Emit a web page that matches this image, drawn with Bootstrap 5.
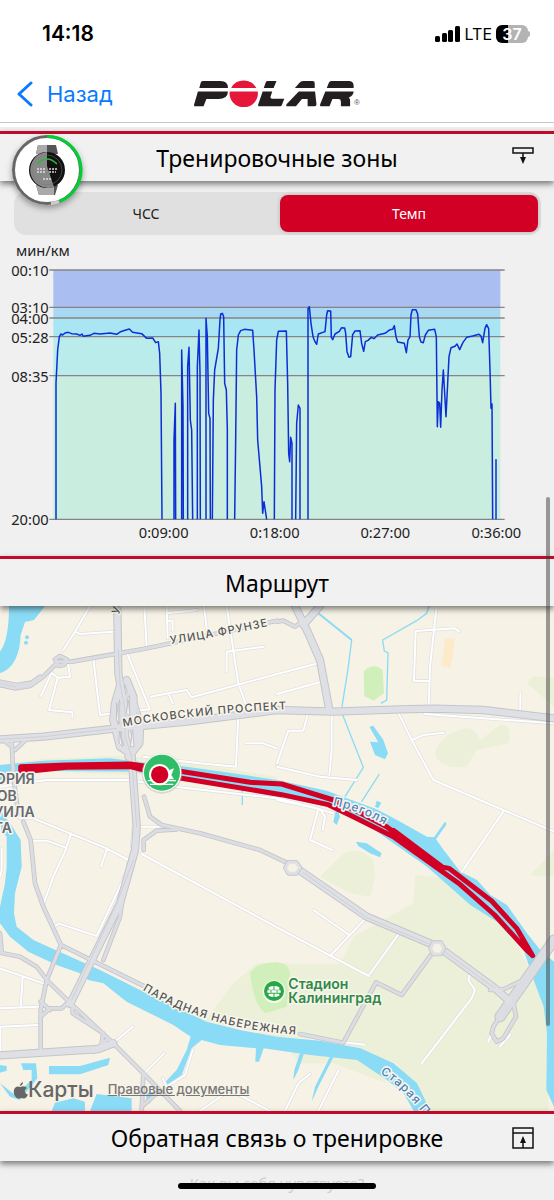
<!DOCTYPE html>
<html lang="ru">
<head>
<meta charset="utf-8">
<meta name="viewport" content="width=device-width, initial-scale=1">
<title>Polar</title>
<link href="https://cdn.jsdelivr.net/npm/bootstrap@5.3.0/dist/css/bootstrap.min.css" rel="stylesheet">
<style>
body{background:#f0f0f0;font-family:"Noto Sans",sans-serif;color:#111;overflow-x:hidden}
svg{display:block}
.status-row{height:65px;padding:2px 24px 0 42px;font-family:Inter,sans-serif;color:#000}
.clock{font-size:21px;font-weight:600}
.net{font-size:16px}
.batt{width:32px;height:18px;border-radius:6px;font-size:16px;line-height:18px;font-weight:600;color:#fff;background:linear-gradient(90deg,#000 37%,#b3b3b3 37%)}
.batt-tip{width:2px;height:6px;border-radius:0 2px 2px 0;background:#b3b3b3}
.nav-row{height:58px;border-bottom:1px solid #c6c6c6;display:grid;grid-template-columns:1fr auto 1fr;padding:0 17px}
.back{font:22px/28px Inter,sans-serif;color:#0a7aff;text-decoration:none;gap:14px}
.reg{font:8px/8px "Liberation Sans",sans-serif;color:#555}
.sec-head{height:50px;border-top:3px solid #c00a2b;background:#f1f1f1;box-shadow:0 3px 6px rgba(0,0,0,.5);display:grid;grid-template-columns:1fr auto 1fr;align-items:center;position:relative;z-index:2;padding:0 20px}
.sec-head h2{font-size:23px;line-height:32px;font-weight:400;margin:0;grid-column:2;color:#000}
.sec-head button{justify-self:end;border:0;background:none;padding:0}
.watch{position:absolute;left:8px;top:-2px;filter:drop-shadow(0 3px 3px rgba(0,0,0,.35))}
.seg{margin:11px 13px 0 14px;padding:3px;gap:5px;background:#e0e0e0;border-radius:12px}
.seg button{flex:1;height:37px;border:0;border-radius:8px;background:none;font-size:14px;color:#222}
.seg button.on{background:#d20024;color:#fff;box-shadow:0 0 4px rgba(0,0,0,.2)}
.chart{margin-top:5px;margin-bottom:6px}
.chart text{font-size:44px;fill:#222}
.map{background:#f6f2e6}
.map svg text{font-family:Inter,sans-serif;paint-order:stroke;stroke:#f8f5ec;stroke-width:9px;stroke-linejoin:round}
.map-foot{position:absolute;left:13px;bottom:7px;color:#666;font-family:Inter,sans-serif}
.map-foot .brand{font-size:21px;line-height:28px;font-weight:500;margin-right:14px}
.map-foot a{font-size:13px;color:#777;font-weight:500}
.foot{height:40px;position:relative;overflow:hidden}
.foot p{font-size:15px;line-height:24px;color:#ccc;margin:0;padding-top:10px}
.home{position:absolute;left:50%;top:22px;margin-left:-99px;width:198px;height:6px;border-radius:3px;background:#000}
.thumb{position:absolute;right:4px;top:497px;width:4px;height:529px;border-radius:2px;background:rgba(60,60,60,.5);z-index:5}
</style>
</head>
<body class="position-relative">
<header class="bg-white pb-1">
  <div class="status-row d-flex align-items-center justify-content-between">
    <span class="clock">14:18</span>
    <div class="d-flex align-items-center">
      <svg width="26" height="18" viewBox="0 0 26 18"><rect x="0" y="11" width="5" height="6" rx="1.5"/><rect x="7" y="8" width="5" height="9" rx="1.5"/><rect x="13" y="5" width="5" height="12" rx="1.5"/><rect x="20" y="1" width="5" height="16" rx="1.5"/></svg>
      <span class="net ms-1 me-1">LTE</span>
      <span class="batt text-center">37</span><span class="batt-tip"></span>
    </div>
  </div>
  <nav class="nav-row align-items-center">
    <a href="#" class="back d-flex align-items-center"><svg width="16" height="28" viewBox="0 0 16 28" fill="none" stroke="#0a7aff" stroke-width="3" stroke-linecap="round" stroke-linejoin="round"><path d="M14 3 2 14 14 25"/></svg>Назад</a>
    <div class="d-flex align-items-end">
      <svg width="160" height="27" viewBox="547 240 452 82" preserveAspectRatio="none" fill="#231f20" role="img" aria-label="Polar">
        <path d="M570 243H622Q643 243 643 264H562L566 248Q567 243 572 243ZM558 275H643Q642 298 616 298H582L574 320H551Q545 320 548 312Z"/>
        <path fill="#e6173a" d="M652 264A40 41 0 0 1 723 264ZM648 275H727A40 41 0 1 1 648 275Z"/>
        <path d="M755 243H780L772 264H744L750 247Q751 243 755 243ZM741 275H768L763 292Q762 297 768 297H802L795 317Q794 320 790 320H732Q726 320 729 312Z"/>
        <path d="M855 243H882Q888 243 888 250V264H832L845 248Q849 243 855 243ZM843 275H889L893 314Q893 320 888 320H868V298H852L835 320H811Q805 320 809 313Z"/>
        <path d="M935 243H984Q998 243 998 258V264H922L928 248Q930 243 935 243ZM918 275H998Q997 288 984 294 989 297 988 303V320H962V305Q962 298 955 298H938L930 320H907Q901 320 904 312Z"/>
      </svg><span class="reg">®</span>
    </div>
  </nav>
</header>

<main class="pt-1">
<section>
  <div class="sec-head">
    <svg class="watch" width="78" height="78" viewBox="0 0 78 78" role="img" aria-label="Часы"><circle cx="39" cy="38" r="35" fill="#fff"/><g fill="none" stroke-width="3"><circle cx="39" cy="38" r="33.500" stroke="#666"/><path stroke="#00cf33" d="M39 4.500A33.500 33.500 0 0 1 51 69.500"/><path stroke="#ccc" d="M51 69.500Q47 71 43 71.500"/></g>
      <path fill="#555" d="M30 13H48L50 22H28ZM28 53H50L47 63H31Z"/><path fill="#aaa" d="M30 13H39V22H28ZM28 53H46L46 63H31Z"/><circle cx="39" cy="38" r="18" fill="#111"/><path fill="#888" d="M39 20A18 18 0 1 0 46 55L39 34Z"/><circle cx="39" cy="38" r="15" fill="none" stroke="#777" stroke-width=".5"/><path d="M29 32Q39 22 49 32" fill="none" stroke="#2fb63c" stroke-width="1.500"/><g stroke="#ddd" stroke-width="1.500" stroke-dasharray="2 1"><path d="M29 37H37M41 37H49M29 40H37M41 40H48M35 47H44"/></g></svg>
    <h2>Тренировочные зоны</h2>
    <button type="button" aria-label="Развернуть"><svg width="22" height="24" viewBox="0 0 22 24" fill="none" stroke="#111" stroke-width="1.500"><path d="M1 2H21V7H1ZM11 7V12"/><path fill="#111" stroke="none" d="M8 11H14L11 18Z"/></svg></button>
  </div>
  <div class="seg d-flex"><button type="button">ЧСС</button><button type="button" class="on">Темп</button></div>
  <div class="chart">
    <svg width="100%" viewBox="0 0 1662 930">
      <rect x="160" y="90" width="1341" height="112" fill="#aabef2"/><rect x="160" y="202" width="1341" height="32" fill="#a9d8f2"/><rect x="160" y="234" width="1341" height="56" fill="#a9e6f4"/><rect x="160" y="290" width="1341" height="117" fill="#baeceb"/><rect x="160" y="407" width="1341" height="431" fill="#c9eddf"/>
      <path stroke="#858585" stroke-width="4" d="M148 90H1514M148 202H1514M148 234H1514M148 290H1514M148 407H1514M148 838H1514"/>
      <path fill="none" stroke="#0b2ed6" stroke-width="4.500" stroke-linejoin="round" d="M168 838V430L173 330 178 290 183 282 188 285 195 279 205 277 215 281 230 282 240 286 246 282 250 289 270 286 282 280 300 282 330 279 350 283 362 275 375 271 388 267 398 277 425 281 440 295 458 294 467 308 475 305 479 340 483 460 486 838M522 838V600L526 490 527 838M545 838V330L549 500 550 838M563 838V380L567 322 571 540 575 570 578 838M592 838V380L597 270 600 400 601 838M618 838V235L622 290 626 520 630 535 631 838M637 838 640 480 644 390 655 325 660 240 662 222 667 220 671 230 674 430 679 450 682 570V838M704 838 707 600 710 330 715 285 722 272 733 268 758 271 762 330 770 470 773 600 785 740 788 820 792 785 800 838M823 838 825 450 830 300 835 274 859 273 863 430 866 640 869 665 872 592 876 610V838M887 838 890 550 895 495 900 505V838M924 838V206L928 200 933 250 939 290 945 305 950 313 955 282 975 275 980 225 983 212 992 213 994 292 998 299 1005 282 1018 274 1025 263 1034 264 1037 280 1041 335 1047 352 1052 350 1058 284 1065 273 1080 272 1085 310 1091 334 1096 305 1104 301 1114 292 1122 296 1133 285 1155 280 1170 269 1178 268 1183 257 1188 290 1193 306 1213 310 1219 338 1224 300 1230 290 1233 225 1237 209 1248 209 1253 222 1258 290 1263 306 1270 308 1276 285 1285 271 1304 268 1309 290 1312 560 1315 485 1319 490 1322 562 1326 450 1330 390 1338 530 1343 430 1347 350 1353 323 1365 319 1371 312 1379 329 1389 307 1400 292 1418 288 1437 283 1443 288 1448 308 1455 265 1460 254 1466 266 1470 390 1473 505 1476 492 1478 838M1488 838V658"/>
      <text x="48" y="49">мин/км</text>
      <g text-anchor="end"><text x="146" y="107">00:10</text><text x="146" y="220">03:10</text><text x="146" y="252">04:00</text><text x="146" y="308">05:28</text><text x="146" y="425">08:35</text><text x="146" y="856">20:00</text></g>
      <g text-anchor="middle"><text x="491" y="895">0:09:00</text><text x="824" y="895">0:18:00</text><text x="1156" y="895">0:27:00</text><text x="1489" y="895">0:36:00</text></g>
    </svg>
  </div>
</section>

<section>
  <div class="sec-head"><h2>Маршрут</h2></div>
  <div class="map position-relative">
    <svg width="100%" viewBox="0 168 1662 1515">
      <defs>
        <g id="minor"><path d="M270 168 225 245 190 300M225 245 240 252 340 245M205 345 210 380 173 383 155 368M173 383 147 480 217 487V502M155 368 123 438M280 325 300 495 450 478 382 312M433 168 440 290M500 168 503 265M500 212H518V242M500 190 590 180M612 168 620 235M680 168 715 400 740 470M680 365V305L792 290M452 440 505 430 518 460M505 430 560 420 575 442 831 372 955 340M831 432 962 396M715 490 708 650 600 640 430 620M738 580H790L831 595M924 490 910 542H865L831 640M831 650 960 680 1070 690M995 490V600L988 675M1310 168 1290 350 1286 468M1378 245 1365 235 1247 243 1242 393H1288M1196 490 1235 570 1300 690 1662 845M1235 570 1270 555 1332 548M1275 492 1662 520M1561 430V480M1510 785 1386 965M0 710 140 690 380 690 540 712 831 745 950 775 1000 790M831 750 955 776 930 870 997 900M960 776 975 800 968 840M60 805 100 805 320 895 385 930 383 960 290 1158 175 1120 160 1135M100 872 140 872 197 893M213 850 195 905 160 980 132 1058M322 895 303 950M400 830H500L600 850M400 830 395 890M425 912 831 1132 1106 1278M0 1255 130 1300M68 1280 62 1370M0 1375 115 1370M0 1430 115 1425M5 895V960L0 980M1 1430V1510M345 1475 398 1430M432 1570 492 1510M578 1500 555 1575 500 1610 488 1585M1097 1105 990 1218M940 1080 1048 1155M1196 1152 1105 1278M1410 1275 1405 1290 1425 1320 1415 1345 1265 1540M1016 1560 955 1683M930 1572 895 1600 855 1683M600 1683 690 1620 880 1720M1032 1477 1095 1484M1495 1400 1465 1475M1530 1455 1500 1490"/></g>
        <g id="mid"><path d="M0 405 45 415 90 408 130 380 175 335 215 335 300 320 430 297 520 278 831 212M165 328 180 318 200 328 192 345 175 348ZM0 395 50 405 95 398 120 380M70 815 92 870 105 1000 130 1070 183 1185 435 1310M35 575 40 680 55 790M10 570 35 590M75 572 45 600M432 740 450 800 485 825 600 850 780 900 860 938M431 900V870L470 842 530 838M310 1230 360 1100 370 1030M183 1185 140 1290 122 1380V1500M0 1208 60 1220 110 1250 145 1295 212 1360 340 1480 430 1570 540 1683M218 1370V1390L310 1450 305 1480M122 1400 150 1375 185 1375 212 1350M122 1355 150 1380M280 1505 320 1470M430 1570 425 1683M425 1670 470 1630M0 1150 5 1205M831 215 850 212 885 230 920 205M350 168 352 178M1128 1297 1205 1335 1300 1205M1128 1297 1030 1478 900 1452M1540 1355 1548 1400 1510 1465 1490 1475 1475 1450 1480 1430 1500 1400M1470 1320 1510 1318 1570 1290M385 430 365 465 360 530M350 440 340 490M400 440 425 520"/></g>
        <g id="major"><path d="M0 568 130 560 350 535 560 515 831 480 1000 485 1200 478 1300 476 1450 480 1662 505M352 180 355 370 375 480 375 560 395 620 410 830 405 900 360 1060 210 1362M362 400 345 460 340 510 360 590 390 610M380 390 400 440V520L410 590 390 615M400 520 420 530 418 580 385 620M885 168 925 250 960 330 988 480M960 168 910 225M900 962 1100 1100 1290 1180M1335 1205 1485 1315 1525 1350M0 1516 295 1497 340 1480"/></g>
      </defs>
      <g fill="#edf0d8"><path d="M1246 975 1330 985 1400 1050 1500 1100 1560 1200 1610 1300 1645 1400 1645 1683H1291L1190 1540 1000 1470 831 1460 615 1412 700 1300 770 1240 1020 1243 1060 1160 1240 1060ZM860 1492 900 1540 1000 1540 1160 1600 1100 1520ZM960 980 1020 920Q1070 880 1120 930L1125 980 1110 1040 1050 1030ZM1305 610Q1320 550 1400 535 1430 540 1440 570L1500 525Q1540 520 1525 580L1430 600 1400 650H1350Q1310 640 1305 610ZM1580 400 1600 378 1662 385V470ZM1590 975 1662 900V980ZM0 645 130 627 340 618 480 625 831 680 831 690 0 660Z"/></g>
      <g fill="#d0efba"><path d="M1091 365Q1120 335 1148 360L1152 430 1120 452 1093 438Z"/><path d="M750 1270Q770 1235 831 1237 875 1240 870 1290L860 1370 795 1390Q760 1360 750 1270Z"/></g>
      <path fill="#fdeac8" d="M1336 265 1365 267 1352 353 1325 347Z"/>
      <g fill="#8adbf5">
        <path d="M27 168H135L102 210 75 216 62 255Q58 350 0 370V305Q27 270 27 168Z"/><circle cx="81" cy="262" r="6"/><circle cx="78" cy="278" r="6"/>
        <path d="M0 645 130 632 330 625 450 640 560 650 700 670 831 690 980 722 1040 745 1130 778 1191 810 1281 860 1302 862 1335 815 1340 822 1308 868 1331 900 1381 965 1431 990 1471 1035 1521 1065 1581 1150 1621 1200 1662 1235V1670L1639 1620 1641 1450 1631 1370 1601 1290 1571 1200 1491 1115 1411 1065 1281 950 1121 838 1021 780 981 770 900 752 831 740 560 690 400 665 100 662 45 670 45 685 0 690Z"/>
        <path d="M0 780 30 820 62 870 65 950 45 1030 42 1090 50 1130 100 1170 200 1215 300 1260 440 1330 620 1415 720 1440 831 1460 961 1472 1081 1495 1181 1540 1251 1600 1291 1683H1241L1211 1630 1161 1590 1071 1530 931 1515 791 1495 777 1535H766L768 1495 660 1485 605 1470 575 1495 545 1575 505 1605 492 1600 530 1560 560 1500 572 1460 520 1425 440 1385 380 1355 310 1300 265 1290 240 1270 170 1245 85 1205 30 1160 0 1120V1070L15 1000 20 950V860L0 840Z"/>
        <path d="M912 1510 895 1560 880 1590 883 1560 900 1510ZM1000 1522 955 1610 935 1655 945 1610 990 1520ZM1108 530 1120 527 1150 570 1164 610 1155 628 1125 615 1110 575 1135 577ZM1068 875 1100 880 1145 910 1140 922 1110 910 1075 888ZM147 1548H240L330 1523 325 1545 240 1573H147ZM63 1540H108L112 1585 60 1650 30 1640 0 1600 45 1635 95 1590V1560H70ZM0 1545 20 1548V1562L0 1568ZM155 1683 165 1658 220 1645 255 1655V1683ZM270 1683 290 1632 395 1645V1683ZM440 1630 465 1625 450 1660H438ZM1130 752 1144 758 1135 775 1125 770ZM1010 770 1020 800 1010 825 1000 815Z"/>
      </g>
      <g fill="none" stroke="#8adbf5" stroke-width="4"><path stroke-width="6" d="M955 190 1055 270"/><path d="M1055 270 1045 350 1026 470 1030 500 1090 652 1035 740M1138 672 1085 755M1287 168 1280 190 1250 212 1148 270 1153 303 1164 308 1160 450 1143 460M727 715V765"/></g>
      <g fill="none" stroke-linejoin="round" stroke-linecap="round">
        <use href="#minor" stroke="#dedede" stroke-width="10"/><use href="#minor" stroke="#fff" stroke-width="6"/>
        <use href="#mid" stroke="#c3c5c9" stroke-width="14"/><use href="#major" stroke="#c3c5c9" stroke-width="25"/>
        <path d="M1662 1170 1500 1400" stroke="#c3c5c9" stroke-width="34"/><path d="M1662 1170 1500 1400" stroke="#dcdde2" stroke-width="28"/>
        <use href="#mid" stroke="#dcdde2" stroke-width="9"/><use href="#major" stroke="#dfe0e5" stroke-width="19"/>
        <path stroke="#cfd0d4" stroke-width="3" d="M0 568 130 560 350 535M355 300 360 400 375 480V560L395 620 410 830M400 930 350 1060 215 1350M910 968 1100 1103 1290 1183M1340 1210 1485 1315"/>
        <g fill="#f6f2e6" stroke="#c3c5c9" stroke-width="3"><path d="M350 460 358 520 350 510ZM385 450 390 500 380 490ZM358 545 368 590 358 580ZM398 540 402 590 392 590Z"/></g>
        <g stroke="#c3c5c9" stroke-width="14"><path id="rb" fill="#f6f2e6" d="M866 937H888L900 953 888 970H866L856 953ZM1300 1178H1322L1332 1195 1322 1212H1300L1292 1195Z"/></g><use href="#rb" stroke="#dfe0e5" stroke-width="9"/>
      </g>
      <g fill="none" stroke="#d20024" stroke-width="15" stroke-linejoin="round" stroke-linecap="round"><path d="M62 650 200 645 390 642 540 664 750 697 845 702 1000 750 1080 788 1160 830 1200 860 1320 950 1347 955 1475 1053 1550 1135 1598 1217 1575 1195 1484 1095 1380 1003 1180 860 1060 800 985 764 845 734 540 684 420 657 390 650 200 652 150 657 85 664 62 662Z"/><path d="M1180 845 1320 950" stroke-width="22"/></g>
      <g><circle cx="486" cy="670" r="61" fill="#bbb" opacity=".5"/><circle cx="486" cy="668" r="58" fill="#f4f9f2"/><circle cx="486" cy="668" r="54" fill="#2fbd67"/><path d="M443 692H528M450 703H520" stroke="#fff" stroke-width="4"/><path d="M508 660 522 655 514 675 522 688H505Z" fill="#fff"/><circle cx="479" cy="674" r="32" fill="#fff"/><circle cx="479" cy="674" r="26" fill="#d20024"/></g>
      <g><circle cx="822" cy="1325" r="34" fill="#f5f9ef"/><circle cx="822" cy="1323" r="30" fill="#28a845"/><path d="M806 1312Q822 1304 838 1312V1319H806ZM802 1321H842V1328H802ZM806 1331H838V1337Q822 1345 806 1337Z" fill="#fff"/><path d="M822 1306V1320M822 1330V1342M813 1321V1328M831 1321V1328" stroke="#28a845" stroke-width="3"/></g>
      <path id="p1" fill="none" d="M512 282 Q650 262 806 228"/><path id="p2" fill="none" d="M370 530 Q600 490 868 478"/><path id="p3" fill="none" d="M428 1320 Q620 1440 920 1456"/><path id="p4" fill="none" d="M998 766 Q1090 785 1166 832"/><path id="p5" fill="none" d="M1140 1570 Q1210 1610 1290 1720"/>
      <g font-size="33" font-weight="500" fill="#555" letter-spacing="3"><text><textPath href="#p1">УЛИЦА ФРУНЗЕ</textPath></text><text><textPath href="#p2">МОСКОВСКИЙ ПРОСПЕКТ</textPath></text><text><textPath href="#p3">ПАРАДНАЯ НАБЕРЕЖНАЯ</textPath></text></g>
      <text font-size="33" x="340" y="192" fill="#444" transform="rotate(-70 350 182)">У</text>
      <g font-size="36" font-weight="500" fill="#4a83bd" letter-spacing="3"><text><textPath href="#p4">Преголя</textPath></text><text><textPath href="#p5">Старая П</textPath></text></g>
      <g font-size="42" font-weight="600" fill="#666b72" text-anchor="end"><text x="104" y="703">ТОРИЯ</text><text x="50" y="752">ОВ</text><text x="104" y="801">УИЛА</text><text x="36" y="848">ТА</text></g>
      <g font-size="42" font-weight="600" fill="#2e8a48"><text x="865" y="1317">Стадион</text><text x="865" y="1359">Калининград</text></g>
    </svg>
    <div class="map-foot d-flex align-items-center"><svg width="15" height="17" viewBox="0 0 15 17" fill="#666"><path d="M10 0Q10 3 7 4 7 1 10 0ZM7.500 5Q11 3 14 6 11 8 12 10 12.500 12 15 12.500 13 17 10.500 16.500 8 15.500 6 16.500 3 17 1 12 0 7 3 5 5 4 7.500 5Z"/></svg><span class="brand">Карты</span><a href="#">Правовые документы</a></div>
  </div>
</section>

<section>
  <div class="sec-head"><h2>Обратная связь о тренировке</h2>
    <button type="button" aria-label="Свернуть"><svg width="22" height="22" viewBox="0 0 22 22" fill="none" stroke="#111" stroke-width="1.500"><path d="M1 1H21V21H1ZM1 6H21M11 21V14"/><path fill="#111" stroke="none" d="M8 16H14L11 9Z"/></svg></button></div>
  <div class="foot text-center"><p>Как вы себя чувствуете?</p><div class="home"></div></div>
</section>
</main>
<div class="thumb"></div>
<script src="https://cdn.jsdelivr.net/npm/bootstrap@5.3.0/dist/js/bootstrap.bundle.min.js"></script>
</body>
</html>
